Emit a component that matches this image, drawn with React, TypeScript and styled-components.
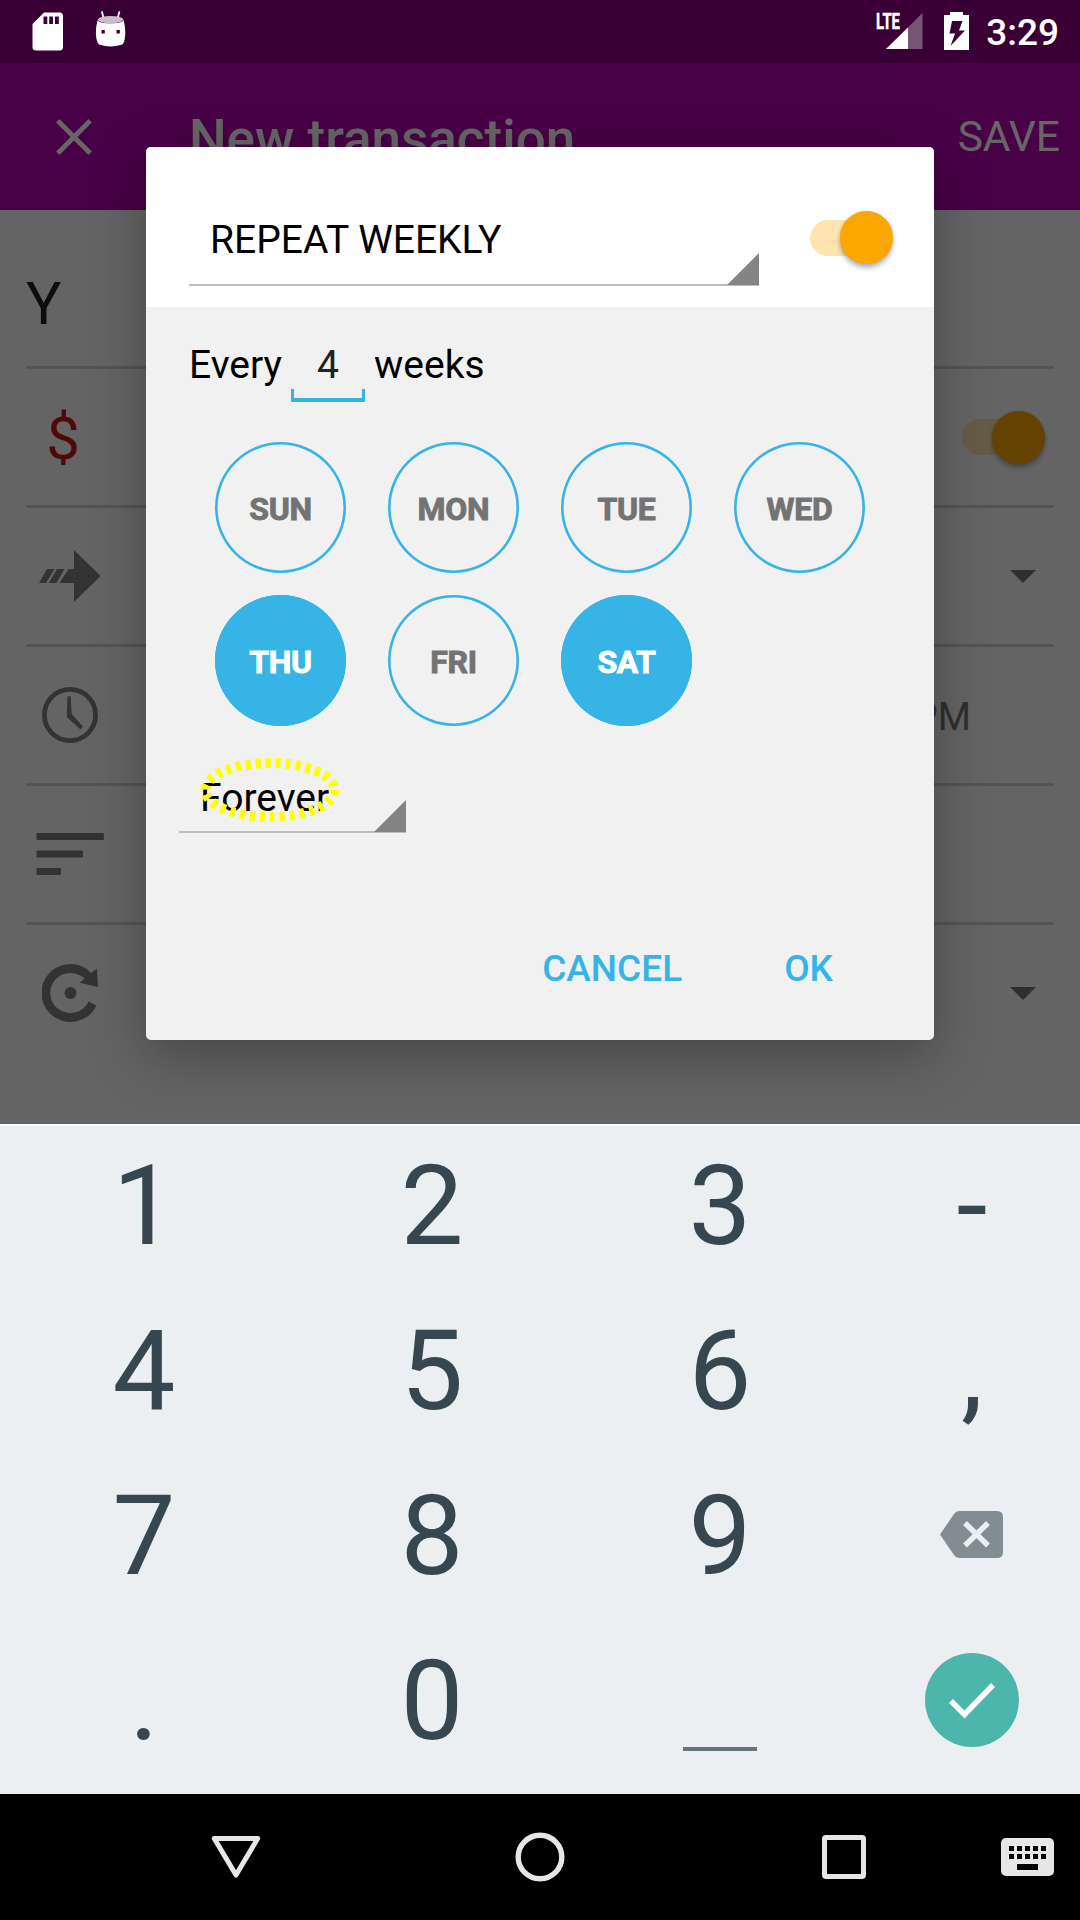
import React from 'react';
import styled, { createGlobalStyle } from 'styled-components';

const BLUE = '#36b4e5';
const FONT = 'Roboto, "Noto Sans", sans-serif';

const GlobalStyle = createGlobalStyle`
  body { margin: 0; background: #000; }
  *, *::before, *::after { box-sizing: border-box; }
  svg { display: block; flex: none; }
  button { border: 0; padding: 0; margin: 0; background: none; font-family: inherit; }
`;

const Screen = styled.div`
  position: relative;
  width: 1080px;
  height: 1920px;
  overflow: hidden;
  display: flex;
  flex-direction: column;
  font-family: ${FONT};
  background: #000;
`;

const StatusBar = styled.header`
  height: 63px;
  flex: none;
  display: flex;
  align-items: flex-start;
  padding: 0 21px 0 32px;
  background: #3a0035;
`;

const StatusIcon = styled.div<{ $gap?: number }>`
  margin-left: ${(p) => p.$gap ?? 0}px;
`;

const Clock = styled.span`
  margin-left: 17px;
  line-height: 66px;
  font-size: 37px;
  font-weight: 500;
  color: #fff;
`;

const Signal = styled.div`
  position: relative;
  margin-left: auto;
`;

const NetworkLabel = styled.span`
  position: absolute;
  left: -1px;
  top: 10px;
  font-size: 22.5px;
  line-height: 22px;
  font-weight: 700;
  color: #fff;
  -webkit-text-stroke: 0.5px #fff;
  transform: scaleX(0.66);
  transform-origin: left;
`;

const Window = styled.div`
  position: relative;
  height: 1061px;
  flex: none;
  overflow: hidden;
  background: #fafafa;
`;

const AppBar = styled.div`
  height: 147px;
  display: flex;
  align-items: center;
  padding: 0 20px 0 55.5px;
  background: #b500b0;
  color: #fff;
`;

const Title = styled.h1`
  flex: 1;
  margin: 4px 0 0 97.5px;
  font-size: 53px;
  font-weight: 500;
  line-height: 64px;
`;

const SaveButton = styled.button`
  font-size: 42.5px;
  color: #fff;
`;

const Form = styled.div`
  padding: 0 26px;
`;

const Row = styled.div<{ $tall?: boolean; $last?: boolean }>`
  display: flex;
  align-items: center;
  height: ${(p) => (p.$tall ? 159 : 139)}px;
  padding-top: ${(p) => (p.$tall ? 31 : 0)}px;
  border-bottom: 3px solid ${(p) => (p.$last ? 'transparent' : '#d3d3d3')};
`;

const NameText = styled.span`
  font-size: 59px;
  color: #212121;
`;

const IconCell = styled.div`
  width: 88px;
  display: flex;
  justify-content: center;
`;

const Currency = styled.span`
  margin: 3px 14px 0 0;
  font-size: 60px;
  color: #c41717;
`;

const Trailing = styled.div<{ $right: number }>`
  margin-left: auto;
  padding-right: ${(p) => p.$right}px;
  font-size: 38px;
  color: #757575;
`;

const TimeText = styled.span`
  display: block;
  padding-top: 3px;
`;

const SwitchBox = styled.div`
  width: 83px;
  height: 53px;
  display: flex;
  align-items: center;
`;

const Track = styled.div`
  width: 72px;
  height: 36px;
  border-radius: 18px;
  background: #ffe4b1;
`;

const Thumb = styled.div`
  width: 53px;
  height: 53px;
  flex: none;
  margin-left: -42px;
  border-radius: 50%;
  background: #fba700;
  box-shadow: 0 4px 5px rgba(0, 0, 0, 0.28), 0 0 3px rgba(0, 0, 0, 0.12);
`;

const Scrim = styled.div`
  position: absolute;
  inset: 0;
  padding: 84px 146px 0;
  background: rgba(0, 0, 0, 0.6);
`;

const Dialog = styled.section`
  width: 788px;
  height: 893px;
  display: flex;
  flex-direction: column;
  border-radius: 5px;
  overflow: hidden;
  background: #f1f1f1;
  box-shadow: 0 16px 56px rgba(0, 0, 0, 0.3);
`;

const DialogHeader = styled.div`
  height: 160px;
  display: flex;
  align-items: flex-start;
  padding: 43px 41px 0 43px;
  background: #fff;
`;

const Spinner = styled.div<{ $w: number; $h: number }>`
  position: relative;
  flex: none;
  width: ${(p) => p.$w}px;
  height: ${(p) => p.$h}px;
  padding-left: 21px;
  border-bottom: 2px solid #bdbdbd;
  font-size: 39px;
  color: #000;

  &::after {
    content: '';
    position: absolute;
    right: 0;
    bottom: -1px;
    width: 32px;
    height: 32px;
    background: #848484;
    clip-path: polygon(100% 0, 100% 100%, 0 100%);
  }
`;

const SpinnerText = styled.span<{ $lh: number }>`
  display: block;
  line-height: ${(p) => p.$lh}px;
`;

const HeaderSwitch = styled.div`
  margin: 21px 0 0 auto;
`;

const DialogBody = styled.div`
  flex: 1;
  display: flex;
  flex-direction: column;
  padding: 21px 0 0 33px;
`;

const Interval = styled.div`
  display: flex;
  height: 73px;
  margin-left: 10px;
  line-height: 75px;
  font-size: 39px;
  color: #000;
`;

const IntervalWord = styled.span<{ $w?: number; $gap?: number }>`
  width: ${(p) => (p.$w ? `${p.$w}px` : 'auto')};
  margin-left: ${(p) => p.$gap ?? 0}px;
`;

const NumberField = styled.span`
  position: relative;
  width: 74px;
  text-align: center;
  color: #212121;

  &::after {
    content: '';
    position: absolute;
    left: 0;
    right: 0;
    bottom: -1px;
    height: 13px;
    border: 3px solid ${BLUE};
    border-bottom-width: 4px;
    border-top: 0;
  }
`;

const Days = styled.div`
  display: grid;
  grid-template-columns: repeat(4, 131px);
  grid-auto-rows: 131px;
  gap: 22px 42px;
  margin: 41px 0 41px 36px;
`;

const Day = styled.button<{ $on: boolean }>`
  border-radius: 50%;
  padding-top: 3px;
  background: ${(p) => (p.$on ? BLUE : 'transparent')};
  box-shadow: inset 0 0 0 2.6px ${BLUE};
  color: ${(p) => (p.$on ? '#fff' : '#737373')};
  font-size: 32px;
  font-weight: 700;
  letter-spacing: -0.3px;
  -webkit-text-stroke: 0.9px currentColor;
`;

const Highlight = styled.svg`
  position: absolute;
  left: 16px;
  top: -14px;
  z-index: 1;
`;

const Actions = styled.div`
  display: flex;
  justify-content: flex-end;
  gap: 102px;
  height: 143px;
  margin-top: auto;
  padding-right: 101px;
`;

const Action = styled.button`
  font-size: 37px;
  font-weight: 500;
  color: ${BLUE};
`;

const Keyboard = styled.div`
  height: 670px;
  flex: none;
  display: grid;
  grid-template-columns: 288px 288px 288px 216px;
  grid-template-rows: repeat(4, 165px);
  border-top: 2px solid #fbfbff;
  background: #ebeff2;
`;

const Key = styled.button`
  display: flex;
  align-items: center;
  justify-content: center;
  padding-bottom: 5px;
  font-size: 112px;
  line-height: 160px;
  color: #37474f;
`;

const SpaceMark = styled.span`
  width: 74px;
  height: 4px;
  margin-top: 95px;
  background: #65757b;
`;

const EnterDisc = styled.span`
  display: flex;
  align-items: center;
  justify-content: center;
  width: 94px;
  height: 94px;
  margin-top: -3px;
  border-radius: 50%;
  background: #4db6ac;
`;

const EraseGlyph = styled.span`
  margin: -3px 1px 0 0;
`;

const NavBar = styled.nav`
  flex: 1;
  display: flex;
  align-items: center;
  padding: 0 26px 0 211px;
  background: #000;
`;

const NavSlot = styled.div<{ $gap?: number }>`
  margin-left: ${(p) => p.$gap ?? 0}px;
`;

const Switch = () => (
  <SwitchBox>
    <Track />
    <Thumb />
  </SwitchBox>
);

const Caret = () => (
  <svg width="26" height="13" viewBox="0 0 26 13">
    <path d="M0 0h26L13 13z" fill="#757575" />
  </svg>
);

const DAYS = [
  { label: 'SUN', on: false },
  { label: 'MON', on: false },
  { label: 'TUE', on: false },
  { label: 'WED', on: false },
  { label: 'THU', on: true },
  { label: 'FRI', on: false },
  { label: 'SAT', on: true },
];

const Backspace = () => (
  <EraseGlyph>
    <svg width="63" height="47" viewBox="0 0 63 47">
      <path
        d="M19 0H57Q63 0 63 6V41Q63 47 57 47H19Q16 47 14 44L0 23.500 14 3Q16 0 19 0Z"
        fill="#828d91"
      />
      <path d="M25 12L48 34.500M48 12L25 34.500" stroke="#ebeff2" strokeWidth="5.500" />
    </svg>
  </EraseGlyph>
);

const EnterCheck = () => (
  <EnterDisc>
    <svg width="48" height="38" viewBox="0 0 48 38">
      <path d="M3 20L16.500 33.500L45 4" fill="none" stroke="#fff" strokeWidth="5.500" />
    </svg>
  </EnterDisc>
);

const KEYS: React.ReactNode[] = [
  '1', '2', '3', '-',
  '4', '5', '6', ',',
  '7', '8', '9', <Backspace />,
  '.', '0', <SpaceMark />, <EnterCheck />,
];

export default function App() {
  return (
    <Screen>
      <GlobalStyle />
      <StatusBar>
        <StatusIcon>
          <svg width="32" height="52" viewBox="0 0 32 52">
            <path
              fillRule="evenodd"
              d="M12 12.500H27.500Q31 12.500 31 16V47Q31 50.500 27.500 50.500H4Q.5 50.500 .5 47V24ZM11.500 16.500V24H15.300V16.500ZM17.200 16.500V24H21V16.500ZM23 16.500V24H26.800V16.500Z"
              fill="#fff"
            />
          </svg>
        </StatusIcon>
        <StatusIcon $gap={31}>
          <svg width="32" height="52" viewBox="0 0 32 52">
            <path d="M7 12L8.700 19M24.300 12L22.500 19" stroke="#fff" strokeWidth="1.800" strokeLinecap="round" />
            <path
              fillRule="evenodd"
              d="M2.600 20Q3 22 9 23Q15.500 23.700 22 23Q28 22 28.600 20Q31.500 31 29.500 40Q28.800 44 26.500 44.800Q15.500 48 5 44.800Q2.600 44 1.700 40Q-.3 31 2.600 20ZM6.500 30V33.500H9.800V30ZM21.500 30V33.500H24.800V30Z"
              fill="#fff"
            />
            <ellipse cx="15.600" cy="19.600" rx="12.600" ry="3.600" fill="#cbbcca" />
          </svg>
        </StatusIcon>
        <Signal>
          <svg width="46" height="52" viewBox="0 0 46 52">
            <path d="M45.500 13V49H9Z" fill="#785475" />
            <path d="M31 27.500V49H9Z" fill="#fff" />
          </svg>
          <NetworkLabel>LTE</NetworkLabel>
        </Signal>
        <StatusIcon $gap={21}>
          <svg width="25" height="52" viewBox="0 0 25 52">
            <path
              fillRule="evenodd"
              d="M6 12H19V15H25V50H0V15H6ZM8 21L5.500 33.500H11L6.500 46L21 30.500H15L18.500 21Z"
              fill="#fff"
            />
          </svg>
        </StatusIcon>
        <Clock>3:29</Clock>
      </StatusBar>

      <Window>
        <AppBar>
          <svg width="36" height="36" viewBox="0 0 36 36">
            <path d="M1.800 1.800L34.200 34.200M34.200 1.800L1.800 34.200" stroke="#fff" strokeWidth="4.800" />
          </svg>
          <Title>New transaction</Title>
          <SaveButton>SAVE</SaveButton>
        </AppBar>
        <Form>
          <Row $tall>
            <NameText>Y</NameText>
          </Row>
          <Row>
            <IconCell>
              <Currency>$</Currency>
            </IconCell>
            <Trailing $right={9}>
              <Switch />
            </Trailing>
          </Row>
          <Row>
            <IconCell>
              <svg width="62" height="52" viewBox="0 0 62 52" fill="#808080">
                <path d="M35 0L61.500 26L35 52V33H20.500L29.500 19H35Z" />
                <path d="M8 19H15.500L7 33H0ZM18 19H25.500L17.500 33H10Z" />
              </svg>
            </IconCell>
            <Trailing $right={18}>
              <Caret />
            </Trailing>
          </Row>
          <Row>
            <IconCell>
              <svg width="56" height="56" viewBox="0 0 56 56">
                <circle cx="28" cy="28" r="25.600" fill="none" stroke="#808080" strokeWidth="4.800" />
                <path d="M25.500 10Q27 8 28.700 10L29.700 27L41 39.500L38.500 42.500L24.700 30Z" fill="#808080" />
              </svg>
            </IconCell>
            <Trailing $right={83}>
              <TimeText>PM</TimeText>
            </Trailing>
          </Row>
          <Row>
            <IconCell>
              <svg width="68" height="42" viewBox="0 0 68 42" fill="#808080">
                <path d="M.5 0H67.800V7H.5ZM.5 17.500H47V24.500H.5ZM.5 35H25V42H.5Z" />
              </svg>
            </IconCell>
          </Row>
          <Row $last>
            <IconCell>
              <svg width="56" height="58" viewBox="0 0 56 58">
                <path d="M50.500 39.500A24.500 24.500 0 1 1 46.500 12.500" fill="none" stroke="#808080" strokeWidth="8.800" />
                <path d="M54.800 4.500L56 23L37.500 18.800Z" fill="#808080" />
                <circle cx="28.500" cy="29" r="6" fill="#808080" />
              </svg>
            </IconCell>
            <Trailing $right={18}>
              <Caret />
            </Trailing>
          </Row>
        </Form>

        <Scrim>
          <Dialog>
            <DialogHeader>
              <Spinner $w={570} $h={96}>
                <SpinnerText $lh={101}>REPEAT WEEKLY</SpinnerText>
              </Spinner>
              <HeaderSwitch>
                <Switch />
              </HeaderSwitch>
            </DialogHeader>
            <DialogBody>
              <Interval>
                <IntervalWord $w={102}>Every</IntervalWord>
                <NumberField>4</NumberField>
                <IntervalWord $gap={9}>weeks</IntervalWord>
              </Interval>
              <Days>
                {DAYS.map((d) => (
                  <Day key={d.label} $on={d.on}>
                    {d.label}
                  </Day>
                ))}
              </Days>
              <Spinner $w={227} $h={66}>
                <SpinnerText $lh={63}>Forever</SpinnerText>
                <Highlight width="150" height="74" viewBox="0 0 150 74">
                  <ellipse
                    cx="75"
                    cy="37"
                    rx="64.500"
                    ry="27"
                    fill="none"
                    stroke="#ffff00"
                    strokeWidth="10"
                    strokeDasharray="5 5"
                  />
                </Highlight>
              </Spinner>
              <Actions>
                <Action>CANCEL</Action>
                <Action>OK</Action>
              </Actions>
            </DialogBody>
          </Dialog>
        </Scrim>
      </Window>

      <Keyboard>
        {KEYS.map((k, i) => (
          <Key key={i}>{k}</Key>
        ))}
      </Keyboard>

      <NavBar>
        <NavSlot>
          <svg width="50" height="44" viewBox="0 0 50 44">
            <path d="M3.300 3.500H46.700L25 40Z" fill="none" stroke="#e6e6e6" strokeWidth="5" strokeLinejoin="round" />
          </svg>
        </NavSlot>
        <NavSlot $gap={254}>
          <svg width="50" height="50" viewBox="0 0 50 50">
            <circle cx="25" cy="25" r="21.800" fill="none" stroke="#e6e6e6" strokeWidth="5.400" />
          </svg>
        </NavSlot>
        <NavSlot $gap={257}>
          <svg width="44" height="44" viewBox="0 0 44 44">
            <rect x="2.500" y="2.500" width="39" height="39" rx="1.500" fill="none" stroke="#e6e6e6" strokeWidth="5" />
          </svg>
        </NavSlot>
        <NavSlot $gap={135}>
          <svg width="53" height="38" viewBox="0 0 53 38">
            <rect width="53" height="38" rx="5" fill="#e6e6e6" />
            <path
              d="M8 8h5v5h-5zM16 8h5v5h-5zM24 8h5v5h-5zM32 8h5v5h-5zM40 8h5v5h-5zM8 16h5v5h-5zM16 16h5v5h-5zM24 16h5v5h-5zM32 16h5v5h-5zM40 16h5v5h-5zM16 26h21v6h-21z"
              fill="#000"
            />
          </svg>
        </NavSlot>
      </NavBar>
    </Screen>
  );
}
